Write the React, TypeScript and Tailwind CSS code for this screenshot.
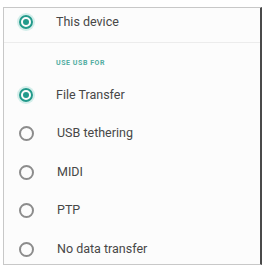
function Radio({ checked }: { checked: boolean }) {
    if (checked) {
        return (
            <span className="w-[14px] h-[14px] rounded-full border-2 border-[#229a8b] ring-2 ring-[#d3eeea] flex items-center justify-center shrink-0">
                <span className="w-[6px] h-[6px] rounded-full bg-[#229a8b]"/>
            </span>
        );
    }
    return <span className="w-[15px] h-[15px] rounded-full border-2 border-[#8c8c8c] shrink-0"/>;
}

function Row({ label, checked }: { label: string, checked?: boolean }) {
    return (
        <div className="h-[38.5px] flex items-center pl-[15px]">
            <Radio checked={!!checked}/>
            <span className="ml-[23px] text-[12.5px] text-[#474747]">{label}</span>
        </div>
    );
}

export default function App() {
    const items = ["File Transfer", "USB tethering", "MIDI", "PTP", "No data transfer"];

    return (
        <div className="w-[265px] h-[267px] bg-white pt-[7px] pl-[3px] overflow-hidden" style={{ fontFamily: "Roboto, sans-serif" }}>
            <div className="w-[259px] h-[258px] bg-[#fcfcfc] border-t border-l border-b border-[#c8c8c8] border-r-2 border-r-[#4a4a4a] overflow-hidden">
                <div className="h-[26px] mt-[1px] flex items-center pl-[15px]">
                    <Radio checked/>
                    <span className="ml-[23px] text-[12.5px] text-[#474747]">This device</span>
                </div>
                <div className="mt-[7px] border-t border-[#ececec]"/>
                <div className="pt-[15px] pl-[52px] h-[33px] text-[7px] font-bold tracking-[0.08em] text-[#52ada1]">
                    USE USB FOR
                </div>
                {items.map((label, i) => (
                    <Row key={label} label={label} checked={i === 0}/>
                ))}
            </div>
        </div>
    );
}
